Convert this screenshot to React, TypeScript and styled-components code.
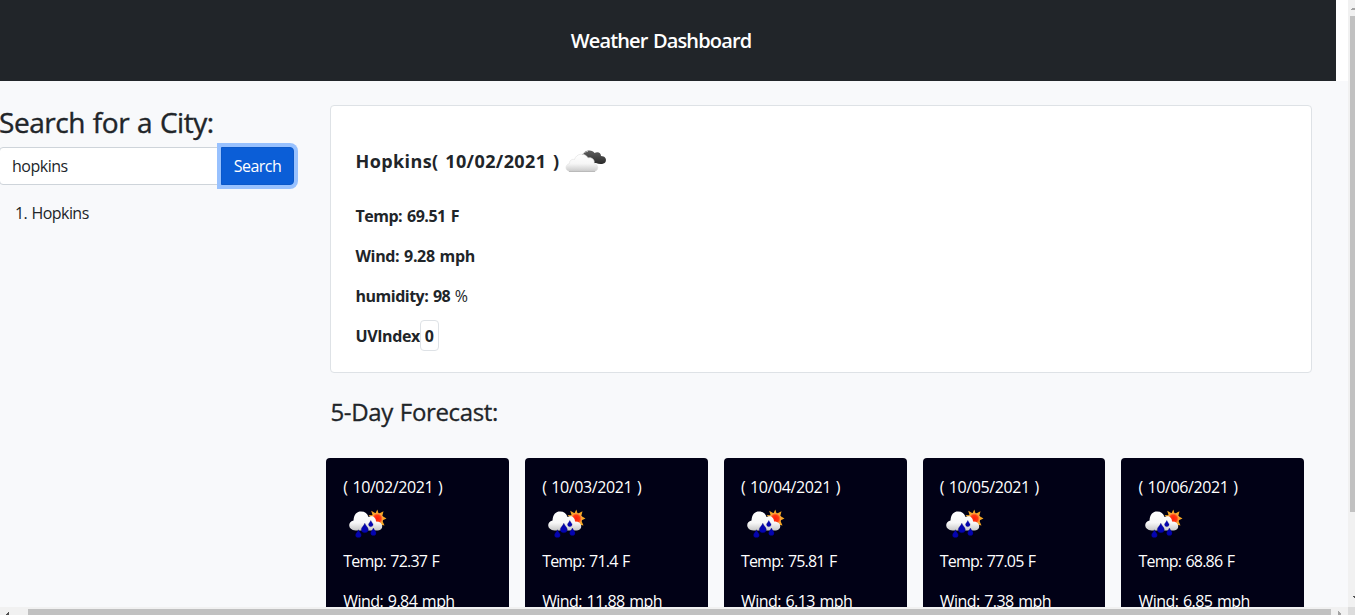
import React from "react";
import styled, { createGlobalStyle } from "styled-components";

const Global = createGlobalStyle`
  *, *::before, *::after { box-sizing: border-box; }
  html, body { margin: 0; overflow: hidden; }
  body {
    background: #fff;
    color: #212529;
    font: 400 16px/24px "Segoe UI", "Open Sans", "Noto Sans", sans-serif;
  }
  h1, h2, h3, h4, p, ol { margin: 0; }
`;

const Window = styled.div`
  width: 1355px;
  height: 615px;
  display: grid;
  grid-template-columns: 1348px 7px;
  grid-template-rows: 607px 8px;
  overflow: hidden;
`;

const Page = styled.div`
  display: flex;
  flex-direction: column;
  overflow: hidden;
`;

const Header = styled.header`
  flex: none;
  width: 1336px;
  height: 81px;
  padding-right: 14px;
  background: #212529;
  color: #fff;
  display: flex;
  align-items: center;
  justify-content: center;
`;

const Spaced = styled.span<{ $ls?: number; $ws?: number }>`
  letter-spacing: ${(p) => p.$ls ?? 0}px;
  word-spacing: ${(p) => p.$ws ?? 1}px;
  white-space: pre;
`;

const Title = styled.h1`
  font-size: 20px;
  line-height: 30px;
  font-weight: 600;
`;

const Main = styled.main`
  flex: 1;
  min-height: 0;
  background: #f8f9fb;
  display: flex;
  overflow: hidden;
`;

const Sidebar = styled.aside`
  flex: none;
  width: 326px;
  padding-top: 24px;
`;

const SearchHeading = styled.h2`
  font-size: 28px;
  line-height: 34px;
  font-weight: 500;
  -webkit-text-stroke: 0.4px #212529;
  margin: 0 0 8px -1px;
`;

const SearchGroup = styled.form`
  display: flex;
  width: 295px;
  height: 38px;
  margin-left: -1px;
`;

const CityInput = styled.input`
  flex: 1;
  min-width: 0;
  border: 1px solid #ced4da;
  border-radius: 4px 0 0 4px;
  padding: 0 12px;
  background: #fff;
  color: #212529;
  font: inherit;
  letter-spacing: -0.5px;
  outline: none;
`;

const SearchButton = styled.button`
  width: 73px;
  padding: 0;
  border: 1px solid #0a58ca;
  border-radius: 0 4px 4px 0;
  background: #0b5ed7;
  color: #fff;
  font: inherit;
  letter-spacing: -0.5px;
  box-shadow: 0 0 0 4px #98c1fe;
`;

const History = styled.ol`
  list-style: none;
  padding: 16px 0 0 15px;
`;

const Content = styled.section`
  flex: none;
  width: 1000px;
  padding-top: 24px;
`;

const Current = styled.article`
  width: 982px;
  height: 268px;
  margin-left: 4px;
  padding: 35px 25px 0 24.5px;
  border: 1px solid #dee2e6;
  border-radius: 4px;
  background: #fff;
`;

const CityLine = styled.h3`
  height: 40px;
  display: flex;
  align-items: center;
  font-size: 18px;
  line-height: 24px;
  font-weight: 700;
  margin-bottom: 23px;
`;

const Stat = styled.p`
  height: 24px;
  margin-bottom: 16px;
  display: flex;
  align-items: center;
  font-weight: 700;
`;

const UvBadge = styled.span`
  width: 19px;
  height: 31px;
  margin: -1px 0 1px;
  padding-top: 1px;
  border: 1px solid #dee2e6;
  border-radius: 4px;
  display: flex;
  align-items: center;
  justify-content: center;
`;

const Light = styled.span`
  font-weight: 400;
`;

const ForecastHeading = styled.h2`
  font-size: 24px;
  line-height: 30px;
  font-weight: 500;
  -webkit-text-stroke: 0.3px #212529;
  margin: 24px 0 31px 4.5px;
`;

const Cards = styled.div`
  display: grid;
  grid-template-columns: repeat(5, 182.8px);
  column-gap: 16px;
  margin-left: 0.15px;
`;

const Card = styled.article`
  height: 230px;
  padding: 17px 17.2px;
  border-radius: 4px;
  background: #010116;
  color: #fff;
`;

const CardText = styled.p`
  height: 24px;
  margin-bottom: 16px;
`;

const CardDate = styled.p`
  height: 25px;
`;

const CardIcon = styled.div`
  height: 49px;
`;

const Side = styled.div`
  background: #f1f1f1;
  display: flex;
  flex-direction: column;
`;

const SideThumb = styled.div`
  height: 496px;
  margin-left: 2px;
  background: #c1c1c1;
`;

const SideArrow = styled.svg`
  flex: none;
  display: block;
`;

const Bottom = styled.div`
  background: #f1f1f1;
  display: flex;
  padding-top: 2px;
`;

const BottomThumb = styled.div`
  width: 1303px;
  background: #c1c1c1;
`;

const Corner = styled.div`
  background: #dcdcdc;
`;

const BrokenClouds = () => (
  <svg width="50" height="40" viewBox="0 0 50 40">
    <defs>
      <linearGradient id="bc-light" x1="0" y1="0" x2="0" y2="1">
        <stop offset="0" stopColor="#fff" />
        <stop offset="0.55" stopColor="#f6f6f6" />
        <stop offset="1" stopColor="#c9c9c9" />
      </linearGradient>
      <linearGradient id="bc-dark" x1="0" y1="0" x2="0" y2="1">
        <stop offset="0" stopColor="#606060" />
        <stop offset="1" stopColor="#2a2a2a" />
      </linearGradient>
    </defs>
    <path d="M23 14 C24 8.500 33 8.500 34.500 12 C38 10 41 12 41 15 C45 15 47 18 45.500 21 C44 23.500 39 23.500 36 22 C32 22 26 21 23 14Z" fill="url(#bc-dark)" />
    <path d="M10 30.500 C5 30 4.500 24 9.500 22.500 C9.500 19 12 18 14.500 18.500 C16 12.500 25 11 28 17 C32 16 35 19 34 22.500 C39 23.500 39 30 34 30.500Z" fill="url(#bc-light)" stroke="#e2e2e2" strokeWidth="0.7" />
    <path d="M22.500 14 C23.500 11.500 25.500 10.600 28 10.400" fill="none" stroke="#bbb" strokeWidth="1" />
    <path d="M9 30.500 H35" stroke="#aaa" strokeWidth="1" opacity="0.7" />
  </svg>
);

const RainSun = () => (
  <svg width="50" height="49" viewBox="0 0 50 49" style={{ display: "block" }}>
    <defs>
      <linearGradient id="rs-cloud" x1="0" y1="0" x2="0" y2="1">
        <stop offset="0" stopColor="#fff" />
        <stop offset="0.6" stopColor="#f7f7f7" />
        <stop offset="1" stopColor="#c8c8c8" />
      </linearGradient>
      <radialGradient id="rs-sun">
        <stop offset="0" stopColor="#ff1d08" />
        <stop offset="0.6" stopColor="#ff3a10" />
        <stop offset="1" stopColor="#ffb54c" />
      </radialGradient>
    </defs>
    <path
      d="M34.300 9.500 L35.700 13.800 L40.500 11.300 L39.300 16 L43.500 18.500 L39.300 20.400 L41.500 25.500 L36.500 24.500 L28 23 L29.500 19 L25.500 15 L29.600 15.200 L28.200 10.700 L32.500 13.200Z"
      fill="#f5a623"
    />
    <circle cx="34.300" cy="18.700" r="5.800" fill="url(#rs-sun)" />
    <path d="M12.500 30.500 C4.500 30 4.500 21.500 10.500 20.500 C11 14 14 11.500 18 11.500 C22 11.500 24.500 13.500 25.500 17 C29 15 33 17 33 21.500 C41 21.500 41 30 35 30.500Z" fill="url(#rs-cloud)" />
    {[
      [21.8, 23.3, 1.2],
      [27.8, 20.4, 0.8],
      [15.4, 29.7, 1],
      [30.4, 28, 0.95],
    ].map(([x, y, s]) => (
      <path
        key={x}
        transform={`translate(${x} ${y}) scale(${s})`}
        d="M0 0 C0.600 2 2.900 3.400 2.900 5.200 A2.900 2.700 0 0 1 -2.900 5.200 C-2.900 3.400 -0.600 2 0 0Z"
        fill="#0404b0"
        stroke="#02026a"
        strokeWidth="0.3"
      />
    ))}
  </svg>
);

const days = [
  { date: "10/02/2021", temp: "72.37", wind: "9.84" },
  { date: "10/03/2021", temp: "71.4", wind: "11.88" },
  { date: "10/04/2021", temp: "75.81", wind: "6.13" },
  { date: "10/05/2021", temp: "77.05", wind: "7.38" },
  { date: "10/06/2021", temp: "68.86", wind: "6.85" },
];

export default function App() {
  return (
    <>
      <Global />
      <Window>
        <Page>
          <Header>
            <Title><Spaced $ls={-0.85}>Weather Dashboard</Spaced></Title>
          </Header>
          <Main>
            <Sidebar>
              <SearchHeading><Spaced $ls={-0.45}>Search for a City:</Spaced></SearchHeading>
              <SearchGroup onSubmit={(e) => e.preventDefault()}>
                <CityInput defaultValue="hopkins" />
                <SearchButton>Search</SearchButton>
              </SearchGroup>
              <History>
                <li><Spaced $ls={-0.55} $ws={0.6}>1. Hopkins</Spaced></li>
              </History>
            </Sidebar>
            <Content>
              <Current>
                <CityLine>
                  <Spaced $ls={0.4} $ws={1.6}>Hopkins( 10/02/2021 )</Spaced>
                  <BrokenClouds />
                </CityLine>
                <Stat><Spaced $ls={-0.5} $ws={1.3}>Temp: 69.51 F</Spaced></Stat>
                <Stat><Spaced $ls={-0.35}>Wind: 9.28 mph</Spaced></Stat>
                <Stat><Spaced $ls={-0.5}>humidity: 98 <Light>%</Light></Spaced></Stat>
                <Stat><Spaced $ls={-0.4}>UVIndex</Spaced><UvBadge>0</UvBadge></Stat>
              </Current>
              <ForecastHeading><Spaced $ls={-0.35}>5-Day Forecast:</Spaced></ForecastHeading>
              <Cards>
                {days.map((d) => (
                  <Card key={d.date}>
                    <CardDate><Spaced $ls={-0.4}>( {d.date} )</Spaced></CardDate>
                    <CardIcon><RainSun /></CardIcon>
                    <CardText><Spaced $ls={-0.8}>Temp: {d.temp} F</Spaced></CardText>
                    <CardText><Spaced $ls={-0.55}>Wind: {d.wind} mph</Spaced></CardText>
                  </Card>
                ))}
              </Cards>
            </Content>
          </Main>
        </Page>
        <Side>
          <SideArrow width="7" height="16" viewBox="0 0 7 16"><path d="M3 10 V9 H4 V8 H7 V10Z" fill="#a3a3a3" /></SideArrow>
          <SideThumb />
          <SideArrow width="7" height="95" viewBox="0 0 7 95"><path d="M5 84 H7 V86 H6 V85 H5Z" fill="#505050" /></SideArrow>
        </Side>
        <Bottom>
          <svg width="28" height="6" viewBox="0 0 28 6"><path d="M6 6 V5 H7 V4 H8 V3 H9 V6Z" fill="#505050" /></svg>
          <BottomThumb />
          <svg width="17" height="6" viewBox="0 0 17 6"><path d="M7 6 V2 H8 V3 H9 V4 H10 V6Z" fill="#a3a3a3" /></svg>
        </Bottom>
        <Corner />
      </Window>
    </>
  );
}
